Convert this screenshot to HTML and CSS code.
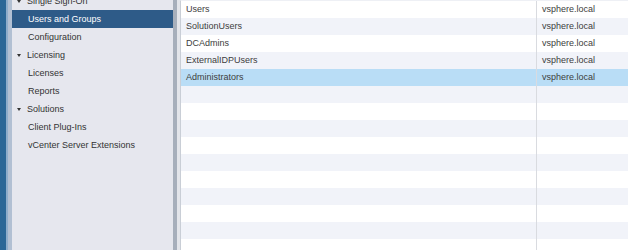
FILE: index.html
```html
<!DOCTYPE html>
<html lang="en">
<head>
    <meta charset="UTF-8">
    <title>Users and Groups</title>
    <link rel="stylesheet" href="styles.css">
</head>
<body>

<div class="layout">
    <div class="rail"></div>

    <div class="sidebar">
        <ul class="nav">
            <li class="group"><span class="caret"></span>Single Sign-On</li>
            <li class="item selected">Users and Groups</li>
            <li class="item">Configuration</li>
            <li class="group"><span class="caret"></span>Licensing</li>
            <li class="item">Licenses</li>
            <li class="item">Reports</li>
            <li class="group"><span class="caret"></span>Solutions</li>
            <li class="item">Client Plug-Ins</li>
            <li class="item">vCenter Server Extensions</li>
        </ul>
    </div>

    <div class="splitter"></div>

    <div class="main">
        <table class="grid">
            <tbody id="gridBody"></tbody>
        </table>
    </div>
</div>

<script>
// group rows, the rest are empty filler rows
const groups = [
    { name: "Users", domain: "vsphere.local" },
    { name: "SolutionUsers", domain: "vsphere.local" },
    { name: "DCAdmins", domain: "vsphere.local" },
    { name: "ExternalIDPUsers", domain: "vsphere.local" },
    { name: "Administrators", domain: "vsphere.local", selected: true }
];

const body = document.getElementById("gridBody");
for (let i = 0; i < 15; i++) {
    const g = groups[i] || { name: "", domain: "" };
    const row = document.createElement("tr");
    if (g.selected) row.className = "selected";
    row.innerHTML = `<td class="name">${g.name}</td><td class="domain">${g.domain}</td>`;
    body.appendChild(row);
}
</script>

</body>
</html>
```

FILE: styles.css
```css
body {
    margin: 0;
    font-family: "Liberation Sans", Arial, sans-serif;
    font-size: 9px;
    color: #3a3a3a;
    background: #fff;
    overflow: hidden;
}
.layout {
    display: flex;
    height: 250px;
}
.rail {
    width: 12px;
    background: linear-gradient(to right, #2b6797 0 6px, #8eadcb 6px 8px, #b2c0d3 8px 12px);
}
.sidebar {
    width: 161px;
    background-color: #e6e7ee;
    overflow: hidden;
}
.nav {
    list-style: none;
    margin: -8px 0 0 0;
    padding: 0;
}
.nav li {
    height: 18px;
    line-height: 18px;
    white-space: nowrap;
}
.nav .group {
    padding-left: 5px;
    color: #333;
}
.nav .item {
    padding-left: 16px;
    color: #333;
}
.nav .selected {
    background-color: #2e5b88;
    color: #fff;
}
.caret {
    display: inline-block;
    width: 0;
    height: 0;
    border-left: 2.5px solid transparent;
    border-right: 2.5px solid transparent;
    border-top: 3px solid #333;
    margin-right: 6px;
    vertical-align: 1px;
}
.splitter {
    width: 7px;
    background: linear-gradient(to right, #a7afbb 0 4px, #e3e5ea 4px 7px);
}
.main {
    flex: 1;
    border-left: 1px solid #c9ced6;
    border-top: 1px solid #eef0f5;
    background: #fff;
    overflow: hidden;
}
.grid {
    width: 100%;
    border-collapse: collapse;
    table-layout: fixed;
}
.grid td {
    height: 17px;
    line-height: 17px;
    padding: 0 0 0 5px;
    white-space: nowrap;
    color: #3d3d3d;
}
.grid .name {
    width: 350px;
    border-right: 1px solid #d9dbe0;
}
.grid tr:nth-child(even) {
    background-color: #f1f3f9;
}
.grid tr.selected {
    background-color: #b9ddf6;
}
```
